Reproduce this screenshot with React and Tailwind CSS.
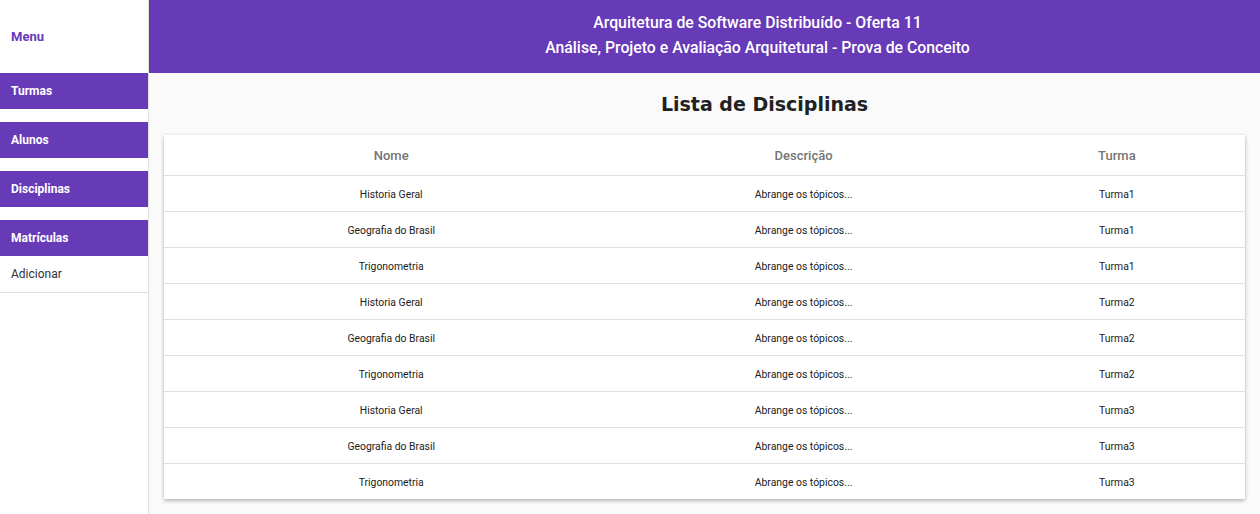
import React from 'react';

const rows = [
  ['Historia Geral', 'Turma1'],
  ['Geografia do Brasil', 'Turma1'],
  ['Trigonometria', 'Turma1'],
  ['Historia Geral', 'Turma2'],
  ['Geografia do Brasil', 'Turma2'],
  ['Trigonometria', 'Turma2'],
  ['Historia Geral', 'Turma3'],
  ['Geografia do Brasil', 'Turma3'],
  ['Trigonometria', 'Turma3'],
];

function MenuItem({ label }) {
  return (
    <div className="h-[36px] bg-[#673ab7] text-white text-[12px] font-bold flex items-center px-[11px]">
      {label}
    </div>
  );
}

export default function App() {
  return (
    <div className="flex w-[1260px] h-[514px] overflow-hidden bg-[#fafafa] font-['Roboto',sans-serif]">
      <aside className="w-[149px] shrink-0 bg-white border-r border-[#e0e0e0] flex flex-col">
        <div className="h-[73px] flex items-center px-[11px] text-[13px] font-bold text-[#673ab7]">
          Menu
        </div>
        <div className="flex flex-col gap-[13px]">
          <MenuItem label="Turmas" />
          <MenuItem label="Alunos" />
          <MenuItem label="Disciplinas" />
        </div>
        <div className="mt-[13px]">
          <MenuItem label="Matrículas" />
          <div className="h-[37px] flex items-center px-[11px] text-[12px] text-[#333] border-b border-[#e0e0e0]">
            Adicionar
          </div>
        </div>
      </aside>
      <main className="flex-1 flex flex-col">
        <header className="h-[73px] bg-[#673ab7] text-white text-[15.8px] font-medium leading-[25px] flex flex-col items-center justify-center pl-[106px] pb-[3px]">
          <div>Arquitetura de Software Distribuído - Oferta 11</div>
          <div>Análise, Projeto e Avaliação Arquitetural - Prova de Conceito</div>
        </header>
        <h2 className="pl-[120px] text-center pt-[18px] pb-[18px] text-[19px] font-bold text-[#212121] font-['DejaVu_Sans',sans-serif] leading-[26px]">
          Lista de Disciplinas
        </h2>
        <div className="mx-[15px] bg-white shadow-[0_2px_4px_rgba(0,0,0,0.25),0_0_3px_rgba(0,0,0,0.08)]">
          <table className="w-full table-fixed border-collapse">
            <colgroup>
              <col className="w-[454px]" />
              <col className="w-[370px]" />
              <col className="w-[256px]" />
            </colgroup>
            <thead>
              <tr className="h-[40px] border-b border-[#e0e0e0] text-[13px] font-medium text-[#757575]">
                <th className="font-medium pt-[2px]">Nome</th>
                <th className="font-medium pt-[2px]">Descrição</th>
                <th className="font-medium pt-[2px]">Turma</th>
              </tr>
            </thead>
            <tbody>
              {rows.map(([nome, turma], i) => (
                <tr
                  key={i}
                  className={`h-[36px] text-[10.4px] text-[#212121] text-center ${i < rows.length - 1 ? 'border-b border-[#e0e0e0]' : ''}`}
                >
                  <td className="pt-[3px]">{nome}</td>
                  <td className="pt-[3px]">Abrange os tópicos...</td>
                  <td className="pt-[3px]">{turma}</td>
                </tr>
              ))}
            </tbody>
          </table>
        </div>
      </main>
    </div>
  );
}
